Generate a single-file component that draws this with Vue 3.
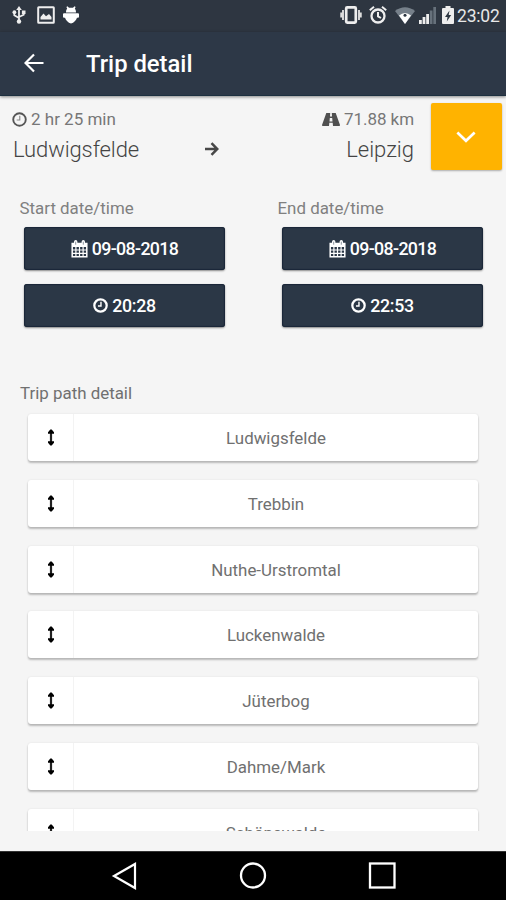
<script setup>
const columns = [
  { label: 'Start date/time', date: '09-08-2018', time: '20:28' },
  { label: 'End date/time', date: '09-08-2018', time: '22:53' },
]
const stops = ['Ludwigsfelde', 'Trebbin', 'Nuthe-Urstromtal', 'Luckenwalde', 'Jüterbog', 'Dahme/Mark', 'Schönewalde']
</script>

<template>
  <div class="screen">
    <div class="status">
      <div class="status-left">
        <svg class="usb" viewBox="0 0 14 18" width="14" height="18">
          <path d="M7 3v12M2.300 6v3.200L7 12M11.700 6v2.700L7 11" fill="none" stroke="#eee" stroke-width="1.800" />
          <path d="M7 0l2.800 4H4.200z" fill="#eee" /><circle cx="7" cy="15.500" r="2.200" fill="#eee" />
          <circle cx="2.400" cy="6.200" r="1.900" fill="#eee" /><path d="M9.900 4.500h3.600v3.500H9.900z" fill="#eee" />
        </svg>
        <svg class="image" viewBox="0 0 18 18" width="18" height="18">
          <rect x="1.200" y="1.200" width="15.600" height="15.600" rx="0.500" fill="none" stroke="#eee" stroke-width="2" />
          <path d="M3.500 13.500V11l3-3.500 2.500 2.700 3-2.200 2.500 3v2.500z" fill="#eee" />
        </svg>
        <svg class="droid" viewBox="0 0 16 18" width="16" height="18">
          <path d="M3 6.500C3 4.500 3.600 3.300 4.200 2.800L3.400 1l1-.8 1.600 1.600h4L11.600.2l1 .8-.8 1.800c.6.500 1.200 1.700 1.200 3.700z" fill="#fff" />
          <path d="M0 8.200q0-1 1-1h14q1 0 1 1v2.500q0 1-1 1h-1Q12.500 16 8 17.500 3.500 16 2 11.700H1q-1 0-1-1z" fill="#fff" />
        </svg>
      </div>
      <div class="status-right">
        <svg class="vibrate" viewBox="0 0 22 18" width="22" height="18">
          <rect x="6.200" y="1.400" width="9.600" height="15.200" rx="1" fill="none" stroke="#eee" stroke-width="2.700" />
          <path d="M3 4v10M19 4v10M1.200 6.500v5M20.800 6.500v5" stroke="#ddd" stroke-width="1.900" />
        </svg>
        <svg class="alarm" viewBox="0 0 18 18" width="18" height="18">
          <circle cx="9" cy="10" r="6.500" fill="none" stroke="#eee" stroke-width="2.300" />
          <path d="M.8 4.200L5 .8M17.200 4.200L13 .8M9 6v4.300l3 1.700" fill="none" stroke="#eee" stroke-width="2" />
        </svg>
        <svg class="wifi" viewBox="0 0 20 17" width="20" height="17">
          <path d="M0 4Q10-3.500 20 4L10 17z" fill="#76808a" />
          <path d="M4 8.500Q10 3.500 16 8.500L10 17z" fill="#fff" /><circle cx="10" cy="8.200" r="1.500" fill="#2d3742" />
        </svg>
        <svg class="signal" viewBox="0 0 17 17" width="17" height="17">
          <path d="M0 13h2.800v4H0zM3.600 10h2.800v7H3.600zM7.200 7H10v10H7.200z" fill="#eee" />
          <path d="M10.800 3.500h2.700V17h-2.700zM14.300 0H17v17h-2.700z" fill="#67717b" />
        </svg>
        <svg class="battery" viewBox="0 0 12 18" width="12" height="18">
          <path d="M3.500 0h5v2H11q1 0 1 1v14q0 1-1 1H1q-1 0-1-1V3q0-1 1-1h2.500z" fill="#eee" />
          <path d="M7.500 4.500L3 11h2.500L4.800 15.500 9.200 9H6.700z" fill="#2d3742" />
        </svg>
        <span class="clock">23:02</span>
      </div>
    </div>

    <header class="appbar">
      <svg class="back" viewBox="0 0 20 20" width="20" height="20">
        <path d="M19.500 10H2M10 1.500L1.500 10l8.500 8.500" fill="none" stroke="#fff" stroke-width="2.200" />
      </svg>
      <h1>Trip detail</h1>
    </header>

    <main class="content">
      <section class="summary">
        <div class="facts">
          <div class="meta">
            <span class="meta-item">
              <svg viewBox="0 0 16 16" width="15" height="15"><circle cx="8" cy="8" r="6.700" fill="none" stroke="#555" stroke-width="2" /><path d="M8.300 4v4.500H5" fill="none" stroke="#888" stroke-width="1.200" /></svg>
              <span class="duration">2 hr 25 min</span>
            </span>
            <span class="meta-item">
              <svg class="road" viewBox="0 0 18 13" width="18" height="13">
                <path fill-rule="evenodd" d="M4.300 0h9.400L18 12q.2 1-.8 1H.8Q-.2 13 0 12zM8.200 0L8 3.500h2L9.800 0zM7.800 5l-.3 3.500h3L10.200 5zM7.300 9.700l-.3 3.300h4l-.3-3.300z" fill="#505050" />
              </svg>
              <span class="distance">71.88 km</span>
            </span>
          </div>
          <div class="route">
            <span class="from">Ludwigsfelde</span>
            <svg class="to-arrow" viewBox="0 0 14 14" width="14" height="14"><path d="M0 7h12M6.500 1.200L12.300 7l-5.800 5.800" fill="none" stroke="#484848" stroke-width="2.500" /></svg>
            <span class="to">Leipzig</span>
          </div>
        </div>
        <button class="expand">
          <svg viewBox="0 0 22 13" width="20" height="12"><path d="M1.500 1.500L11 10.700l9.500-9.200" fill="none" stroke="#fff" stroke-width="2.900" /></svg>
        </button>
      </section>

      <section class="times">
        <div v-for="c in columns" :key="c.label" class="column">
          <div class="label">{{ c.label }}</div>
          <button class="pick">
            <svg viewBox="0 0 17 18" width="17" height="18">
              <path d="M1.200 3.500h14.600v13.300H1.200z" fill="none" stroke="#fff" stroke-width="1.500" />
              <path d="M1 3h15v4H1z" fill="#fff" />
              <path d="M1 10h15M1 13.300h15M4.900 6v11M8.500 6v11M12.100 6v11" stroke="#fff" stroke-width="1.200" />
              <path d="M4.700 1.700v3M12.300 1.700v3" stroke="#fff" stroke-width="3.400" stroke-linecap="round" />
              <path d="M4.700 1.700v3M12.300 1.700v3" stroke="#8b949e" stroke-width="1" />
            </svg>
            <span class="date">{{ c.date }}</span>
          </button>
          <button class="pick">
            <svg viewBox="0 0 16 16" width="15" height="15"><circle cx="8" cy="8" r="6.600" fill="none" stroke="#fff" stroke-width="2.400" /><path d="M8.500 4v4.600H5.300" fill="none" stroke="#fff" stroke-width="1.500" /></svg>
            <span class="time">{{ c.time }}</span>
          </button>
        </div>
      </section>

      <section class="path">
        <div class="path-title">Trip path detail</div>
        <div class="list">
          <div v-for="s in stops" :key="s" class="stop">
            <div class="handle">
              <svg viewBox="0 0 8 17" width="8" height="17"><path d="M4 3v11" stroke="#222" stroke-width="2.200" /><path d="M3.300.5h1.400L7 3.300v1.500H1V3.300zM3.300 16.500h1.400L7 13.700v-1.500H1v1.500z" fill="#000" /></svg>
            </div>
            <div class="name">{{ s }}</div>
          </div>
        </div>
      </section>
    </main>

    <nav class="navbar">
      <svg viewBox="0 0 28 28" width="28" height="28"><path d="M25 2v24L4 14z" fill="none" stroke="#fff" stroke-width="2.200" /></svg>
      <svg viewBox="0 0 28 28" width="28" height="28"><circle cx="14" cy="13.500" r="12" fill="none" stroke="#fff" stroke-width="2.300" /></svg>
      <svg viewBox="0 0 28 28" width="28" height="28"><rect x="2" y="1.500" width="24.500" height="24" fill="none" stroke="#fff" stroke-width="2.300" /></svg>
    </nav>
  </div>
</template>

<style>
body { margin: 0; background: #f5f5f5; }
</style>

<style scoped>
* { box-sizing: border-box; }
.screen { width: 506px; height: 900px; display: flex; flex-direction: column; overflow: hidden; background: #f5f5f5; font-family: Roboto, "Liberation Sans", sans-serif; color: #777; }
svg { display: block; flex: none; }
button { border: 0; padding: 0; font-family: inherit; display: flex; align-items: center; justify-content: center; }
.status { height: 32px; flex: none; background: #2e3641; display: flex; justify-content: space-between; padding: 0 6px 2px 12px; }
.status-left, .status-right { display: flex; align-items: center; }
.image { margin-left: 11px; }
.droid { margin-left: 8px; }
.alarm { margin-left: 7px; }
.wifi { margin-left: 8px; }
.signal { margin-left: 4px; }
.battery { margin-left: 6px; }
.clock { margin: 2px 0 0 3px; font-size: 17.500px; line-height: 20px; color: #e8e8e8; width: 43px; white-space: nowrap; letter-spacing: -0.200px; }
.appbar { height: 64px; flex: none; background: #2d3847; display: flex; align-items: center; padding: 0 0 2px 24px; border-bottom: 1px solid #1d3040; box-shadow: 0 1px 3px rgba(0, 0, 0, .45); z-index: 1; }
.back { margin-top: 1px; }
h1 { margin: 2px 0 0 42px; font-size: 23.800px; line-height: 28px; font-weight: 500; color: #fff; }
.content { flex: 1; min-height: 0; display: flex; flex-direction: column; }
.summary { display: flex; justify-content: space-between; padding: 7px 4px 0 12px; }
.facts { width: 402px; padding-top: 5px; }
.meta { display: flex; justify-content: space-between; height: 22px; font-size: 17px; line-height: 22px; }
.meta-item { display: flex; align-items: center; gap: 4px; }
.distance { letter-spacing: -0.050px; }
.route { display: flex; align-items: center; height: 38px; font-size: 22px; line-height: 38px; font-weight: 300; color: #444; }
.from { width: 193px; padding: 1px 0 0 1px; letter-spacing: -0.100px; }
.to { margin-left: auto; padding-top: 1px; }
.expand { width: 71px; height: 67px; padding: 1px 2px 0 0; background: #ffb300; border-radius: 2px; box-shadow: 0 1px 2px rgba(0, 0, 0, .3); }
.times { display: flex; gap: 57px; padding: 27px 0 0 24px; }
.column { width: 201px; display: flex; flex-direction: column; }
.label, .path-title { font-size: 16.900px; line-height: 22px; color: #808080; }
.label { margin: 0 0 7px -4.500px; }
.pick { height: 43px; padding-top: 1px; gap: 4px; margin-bottom: 14px; border-radius: 3px; background: #2b3746; color: #fff; font-size: 17.800px; font-weight: 500; box-shadow: 0 1px 2px rgba(0, 0, 0, .45), inset 0 0 1px 1px #1a2638; }
.label + .pick { margin-top: 0.500px; }
.date { letter-spacing: -0.650px; }
.time { letter-spacing: -0.350px; }
.path { margin-top: 41.500px; min-height: 0; }
.path-title { padding-left: 20px; color: #707070; }
.list { height: 427px; overflow: hidden; padding: 10px 28px 0; display: flex; flex-direction: column; gap: 18.800px; }
.stop { height: 47px; flex: none; display: flex; background: #fff; border-radius: 3px; box-shadow: 0 2px 2px rgba(0, 0, 0, .24), 0 0 2px rgba(0, 0, 0, .1); }
.handle { width: 46px; display: flex; align-items: center; justify-content: center; border-right: 1px solid #f3f3f3; }
.name { flex: 1; text-align: center; font-size: 16.900px; line-height: 48px; color: #707070; }
.navbar { height: 49px; flex: none; background: #000; border-top: 1px solid #333; display: flex; align-items: center; justify-content: center; gap: 101px; }
</style>
